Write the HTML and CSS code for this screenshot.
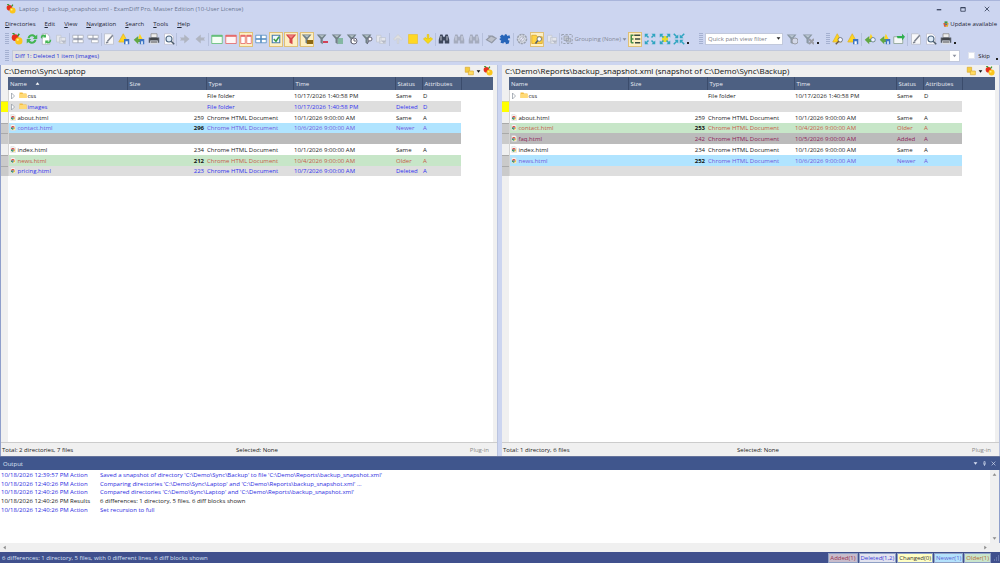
FILE: index.html
```html
<!DOCTYPE html>
<html lang="en">
<head>
<meta charset="utf-8">
<title>Laptop | backup_snapshot.xml - ExamDiff Pro</title>
<link rel="stylesheet" href="styles.css">
</head>
<body>
<svg class="defs" aria-hidden="true">
  <symbol id="apple" viewBox="0 0 16 16"><circle cx="5.5" cy="6" r="4.5" fill="#e8301c"/><path d="M5 2 2 0M9 4l2-3" stroke="#37962d" stroke-width="2"/><circle cx="10.5" cy="10.5" r="4.8" fill="#fbc51c"/><circle cx="9" cy="9" r="1.5" fill="#ffef83"/></symbol>
  <symbol id="refresh" viewBox="0 0 16 16"><path d="M2 7c1-6 8-7 11-3l2-2v6H9l2-2C8 3 5 5 5 7zM14 9c-1 6-8 7-11 3l-2 2V8h6l-2 2c3 3 6 1 6-1z" fill="#43b553"/></symbol>
  <symbol id="pages" viewBox="0 0 16 16"><path d="M3 1h7l3 4v10H3z" fill="#fff" stroke="#aab"/><path d="M1 6c0-4 4-5 6-3l1-2v5H4l1-1C3 4 3 6 3 8zM15 9c0 5-5 6-7 4l-1 2v-5h5l-2 1c2 1 3 0 3-2z" fill="#43b553"/></symbol>
  <symbol id="graypage" viewBox="0 0 16 16"><path d="M2 3h6v9H2zM6 6h8v8H6z" fill="#e4e6ec" stroke="#c2c7d2"/><path d="M8 10h7l-3 4z" fill="#b4b9c6"/></symbol>
  <symbol id="split" viewBox="0 0 16 16"><path d="M1 3h14v4H1zM1 9h14v4H1z" fill="#fff" stroke="#a4a9b6"/><path d="M8 3v10M2 8h12" stroke="#7b8291"/></symbol>
  <symbol id="split2" viewBox="0 0 16 16"><path d="M1 3h14v4H1zM6 9h9v4H6z" fill="#fff" stroke="#a4a9b6"/><path d="M8 3v4M2 8h12" stroke="#7b8291"/></symbol>
  <symbol id="edit" viewBox="0 0 16 16"><path d="M2 1h9l3 3v11H2z" fill="#f8f8fa" stroke="#b7bbc7"/><path d="m6 11 7-8M4 13l3-1" stroke="#7d8390" stroke-width="2"/></symbol>
  <symbol id="tri-save" viewBox="0 0 16 16"><path d="M7 1 13 12H1z" fill="#ffd51f" stroke="#dfb32b"/><path d="M8 8h7v7H8z" fill="#3e76c5"/><path d="M10 11h3v4h-3z" fill="#fff"/></symbol>
  <symbol id="tri-find" viewBox="0 0 16 16"><path d="M7 1 13 12H1z" fill="#ffd51f" stroke="#dfb32b"/><circle cx="11" cy="9" r="3" fill="#f3f5ff" stroke="#555f72"/><path d="m9 11-4 4" stroke="#6e5841" stroke-width="2"/></symbol>
  <symbol id="tri-green" viewBox="0 0 16 16"><path d="M9 1 15 12H6z" fill="#ffd51f"/><path d="M1 9 7 4v4h3v4H7v3z" fill="#62a744"/><path d="M9 8h6v7H9z" fill="#3e76c5"/><path d="M11 11h2v4h-2z" fill="#fff"/></symbol>
  <symbol id="tri-green-find" viewBox="0 0 16 16"><path d="M9 1 15 12H6z" fill="#ffd51f"/><path d="M1 9 7 4v4h3v4H7v3z" fill="#62a744"/><circle cx="12" cy="9" r="3" fill="#eef2ff" stroke="#4c7090"/></symbol>
  <symbol id="print" viewBox="0 0 16 16"><path d="M4 1h8v5H4z" fill="#eee" stroke="#888"/><path d="M1 6h14v7H1z" fill="#555b65"/><path d="M3 10h10v5H3z" fill="#dadce2"/><path d="M3 8h10M4 12h8" stroke="#222" stroke-width="1"/></symbol>
  <symbol id="preview" viewBox="0 0 16 16"><path d="M2 1h8l4 4v10H2z" fill="#fff" stroke="#bbc"/><circle cx="8" cy="8" r="4" fill="#dfecf8" stroke="#506883" stroke-width="1.5"/><path d="m11 11 4 4" stroke="#4b5a6b" stroke-width="2"/></symbol>
  <symbol id="right" viewBox="0 0 16 16"><path d="M1 6h6V2l7 6-7 6v-4H1l2-2z" fill="#b0b5c1"/></symbol>
  <symbol id="left" viewBox="0 0 16 16"><path d="M15 6H9V2L2 8l7 6v-4h6l-2-2z" fill="#b0b5c1"/></symbol>
  <symbol id="win-green" viewBox="0 0 16 16"><path d="M1 3h14v11H1z" fill="#f5fff6" stroke="#55b96c"/><path d="M1 4h14" stroke="#55b96c" stroke-width="2"/></symbol>
  <symbol id="win-red" viewBox="0 0 16 16"><path d="M1 3h14v11H1z" fill="#fff5f5" stroke="#e35c5c"/><path d="M1 4h14" stroke="#e35c5c" stroke-width="2"/></symbol>
  <symbol id="win-split" viewBox="0 0 16 16"><path d="M1 3h6v11H1zM9 3h6v11H9z" fill="#fff" stroke="#e35c5c"/><path d="M1 4h6M9 4h6" stroke="#e35c5c" stroke-width="2"/></symbol>
  <symbol id="grid" viewBox="0 0 16 16"><path d="M1 3h14v10H1z" fill="#fff" stroke="#4c87bf"/><path d="M1 8h14M8 3v10" stroke="#4c87bf" stroke-width="2"/></symbol>
  <symbol id="check" viewBox="0 0 16 16"><path d="M3 3h10v10H3z" fill="#eff8ff" stroke="#497cac" stroke-width="1.5"/><path d="m5 8 3 3 4-6" fill="none" stroke="#3c9a40" stroke-width="2"/></symbol>
  <symbol id="funnel-red" viewBox="0 0 16 16"><path d="M1 2h14L10 8v7l-4-2V8z" fill="#d6474c"/><path d="M4 3h8L8 7z" fill="#f28380"/></symbol>
  <symbol id="funnel" viewBox="0 0 16 16"><path d="M1 2h13L9 8v7l-3-2V8z" fill="#718085"/><path d="M4 3h7L8 6z" fill="#b7c5ca"/></symbol>
  <symbol id="binoc" viewBox="0 0 16 16"><path d="M3 2h3l1 3h2l1-3h3l2 7v5H9v-4H7v4H1V9z" fill="currentColor"/><path d="M4 4v6M12 4v6" stroke="#edf0f7"/></symbol>
  <symbol id="up" viewBox="0 0 16 16"><path d="m8 2 6 6-2 2-3-3v7H7V7l-3 3-2-2z" fill="#dfdfdf" stroke="#c8ccd4"/></symbol>
  <symbol id="down" viewBox="0 0 16 16"><path d="m8 14 6-6-2-2-3 2V2H7v6L4 6 2 8z" fill="#f7da18" stroke="#e5c30c"/></symbol>
  <symbol id="square" viewBox="0 0 16 16"><path d="M2 2h12v12H2z" fill="#ffd824" stroke="#e7c340"/></symbol>
  <symbol id="stack" viewBox="0 0 16 16"><path d="m2 9 6-5 7 3-6 6zM4 4h6l3 2" fill="#bcc0ca" stroke="#9298a4" stroke-width="1.5"/></symbol>
  <symbol id="puzzle" viewBox="0 0 16 16"><path d="m1 5 3-3 3 2c0-3 4-3 4 0l3-1 1 4c-4-1-4 3-1 3l-1 4-4 1c1-3-3-4-3-1l-4-1 1-3C0 10 0 6 3 7z" fill="#2765b9"/></symbol>
  <symbol id="gear" viewBox="0 0 16 16"><circle cx="8" cy="8" r="6" fill="#dce0e8" stroke="#9ba1ad" stroke-width="2" stroke-dasharray="3 1"/><circle cx="8" cy="8" r="3" fill="#eef" stroke="#a1a7b2"/><path d="m5 12 6-8" stroke="#a1a7b2"/></symbol>
  <symbol id="folder" viewBox="0 0 16 16"><path d="M1 3h6l1 2h7v9H1z" fill="#f4bd42"/><path d="M1 6h14v8H1z" fill="#ffda77"/></symbol>
  <symbol id="folder-find" viewBox="0 0 16 16"><path d="M1 3h6l1 2h7v9H1z" fill="#ffd241" stroke="#d4a32b"/><circle cx="11" cy="8" r="3" fill="#fff" stroke="#536171"/><path d="m9 10-3 4" stroke="#536171" stroke-width="2"/></symbol>
  <symbol id="group" viewBox="0 0 16 16"><path d="M1 2h14v12H1z" fill="none" stroke="#8c939f" stroke-dasharray="3 2"/><path d="M4 4h6v6H4zM7 7h6v5H7z" fill="#c4c9d2" stroke="#969dab"/></symbol>
  <symbol id="tree" viewBox="0 0 16 16"><path d="M3 2v11M3 3h3M3 8h3M3 13h3" fill="none" stroke="#448b45" stroke-width="2"/><path d="M7 3h8M8 8h7M8 13h7" stroke="#3b4c3f" stroke-width="2"/></symbol>
  <symbol id="expand" viewBox="0 0 16 16"><path d="M1 6V1h5zM10 1h5v5zM15 10v5h-5zM6 15H1v-5z" fill="#2fa5c0"/><path d="m3 3 3 3M13 3l-3 3M13 13l-3-3M3 13l3-3" stroke="#2fa5c0" stroke-width="2"/></symbol>
  <symbol id="collapse" viewBox="0 0 16 16"><path d="M7 2v5H2zM9 2v5h5zM9 14V9h5zM7 14V9H2z" fill="#2fa5c0"/><path d="m1 1 4 4M15 1l-4 4M15 15l-4-4M1 15l4-4" stroke="#2fa5c0" stroke-width="2"/></symbol>
  <symbol id="mail" viewBox="0 0 16 16"><path d="M1 5h12v9H1z" fill="#f6f8f8" stroke="#849c8b"/><path d="M5 4h7V1l4 4-4 5V7H6z" fill="#30ae4e"/></symbol>
  <symbol id="folders" viewBox="0 0 16 16"><path d="M2 2h7v8H2z" fill="#f4cc3f" stroke="#d7a52a"/><path d="M7 8h8v6H7z" fill="#ffdc63" stroke="#d7a52a"/></symbol>
  <symbol id="update" viewBox="0 0 16 16"><path d="M1 5h7v10H3z" fill="#de5a34"/><path d="M7 5h8l-2 10H7z" fill="#e8ae2e"/><path d="M4 1h8v5H4z" fill="#3c9a49"/><path d="M6 7h5v4H6z" fill="#3a71b8"/></symbol>
  <symbol id="chrome" viewBox="0 0 16 16"><path d="M2 0h9l4 4v12H2z" fill="#f3f3f3" stroke="#ccc"/><path d="M8 4a5 5 0 0 0-5 3l3 4V8h7a5 5 0 0 0-5-4" fill="#dd483a"/><path d="M3 7a5 5 0 0 0 5 7l2-4H6z" fill="#30955a"/><path d="M13 8H9l1 2-2 4a5 5 0 0 0 5-6" fill="#f5c529"/><circle cx="8" cy="9" r="2" fill="#3c78cf"/></symbol>
  <symbol id="caret" viewBox="0 0 8 8"><path d="M1 2h6L4 6z" fill="currentColor"/></symbol>
  <symbol id="expander" viewBox="0 0 8 8"><path d="M2 0v8l4-4z" fill="#fff" stroke="#939ba5"/></symbol>
</svg>
<div class="app">
  <header class="titlebar">
    <svg class="icon"><use href="#apple"/></svg>
    <h1>Laptop&nbsp; |&nbsp; backup_snapshot.xml - ExamDiff Pro, Master Edition (10-User License)</h1>
    <div class="window-buttons">
      <button aria-label="Minimize"><svg viewBox="0 0 8 8"><path d="M1 5h6" stroke="currentColor" stroke-width="1.5"/></svg></button>
      <button aria-label="Maximize"><svg viewBox="0 0 8 8"><path d="M1 2h6v5H1zM1 2.5h6" fill="none" stroke="currentColor"/></svg></button>
      <button aria-label="Close"><svg viewBox="0 0 8 8"><path d="m1 1 6 6M7 1 1 7" stroke="currentColor"/></svg></button>
    </div>
  </header>
  <nav class="menu">
    <button><u>D</u>irectories</button><button><u>E</u>dit</button><button><u>V</u>iew</button><button><u>N</u>avigation</button><button><u>S</u>earch</button><button><u>T</u>ools</button><button><u>H</u>elp</button>
    <a class="update" href="#update"><svg class="icon small"><use href="#update"/></svg>Update available</a>
  </nav>
  <div class="toolbars">
    <div class="toolbar main-tools">
      <i class="handle"></i>
      <button aria-label="Compare"><svg class="icon"><use href="#apple"/></svg></button>
      <button aria-label="Refresh"><svg class="icon"><use href="#refresh"/></svg></button>
      <button aria-label="Swap"><svg class="icon"><use href="#pages"/></svg></button>
      <button aria-label="Copy"><svg class="icon"><use href="#graypage"/></svg></button>
      <i class="sep"></i>
      <button aria-label="Split panes"><svg class="icon"><use href="#split"/></svg></button>
      <button aria-label="Split details"><svg class="icon"><use href="#split2"/></svg></button>
      <i class="sep"></i>
      <button aria-label="Edit"><svg class="icon"><use href="#edit"/></svg></button>
      <button aria-label="Save report"><svg class="icon"><use href="#tri-save"/></svg></button>
      <button aria-label="Save diff"><svg class="icon"><use href="#tri-green"/></svg></button>
      <button aria-label="Print"><svg class="icon"><use href="#print"/></svg></button>
      <button aria-label="Preview"><svg class="icon"><use href="#preview"/></svg></button>
      <i class="sep"></i>
      <button aria-label="Copy right"><svg class="icon"><use href="#right"/></svg></button>
      <button aria-label="Copy left"><svg class="icon"><use href="#left"/></svg></button>
      <i class="sep"></i>
      <button aria-label="Left only"><svg class="icon"><use href="#win-green"/></svg></button>
      <button aria-label="Right only"><svg class="icon"><use href="#win-red"/></svg></button>
      <button class="on" aria-label="Side by side"><svg class="icon"><use href="#win-split"/></svg></button>
      <button aria-label="Grid"><svg class="icon"><use href="#grid"/></svg></button>
      <button class="on" aria-label="Check"><svg class="icon"><use href="#check"/></svg></button>
      <button class="on" aria-label="Filter"><svg class="icon"><use href="#funnel-red"/></svg></button>
      <i class="sep"></i>
      <button class="on" aria-label="Folder filter"><svg class="icon"><use href="#funnel"/><path d="M6 7h6v4H6z" fill="#8c6815"/></svg></button>
      <button aria-label="Exclude filter"><svg class="icon"><use href="#funnel"/><path d="M7 8h5v2H7z" fill="#d14258"/></svg></button>
      <button aria-label="Tree filter"><svg class="icon"><use href="#funnel"/><path d="M7 6h5M7 8h5M7 10h5" stroke="#3c9a56"/></svg></button>
      <button aria-label="Time filter"><svg class="icon"><use href="#funnel"/><circle cx="8" cy="8" r="3" fill="#fff" stroke="#667"/><path d="M8 6v2h2" fill="none" stroke="#667"/></svg></button>
      <button aria-label="Find filter"><svg class="icon"><use href="#funnel"/><circle cx="9" cy="6" r="2" fill="#fff" stroke="#667"/><path d="m8 8-2 3" stroke="#667"/></svg></button>
      <button aria-label="Paste filter"><svg class="icon"><use href="#graypage"/></svg></button>
      <i class="sep"></i>
      <button aria-label="Previous"><svg class="icon"><use href="#up"/></svg></button>
      <button aria-label="Current"><svg class="icon"><use href="#square"/></svg></button>
      <button aria-label="Next"><svg class="icon"><use href="#down"/></svg></button>
      <i class="sep"></i>
      <button class="navy" aria-label="Find"><svg class="icon"><use href="#binoc"/></svg></button>
      <button class="muted" aria-label="Find next"><svg class="icon"><use href="#binoc"/></svg></button>
      <button class="muted" aria-label="Find previous"><svg class="icon"><use href="#binoc"/></svg></button>
      <i class="sep"></i>
      <button aria-label="Merge"><svg class="icon"><use href="#stack"/></svg></button>
      <button aria-label="Plug-ins"><svg class="icon"><use href="#puzzle"/></svg></button>
      <i class="sep"></i>
      <button aria-label="Options"><svg class="icon"><use href="#gear"/></svg></button>
      <button class="on" aria-label="Find folder"><svg class="icon"><use href="#folder-find"/></svg></button>
      <button aria-label="Folders"><svg class="icon"><use href="#graypage"/></svg></button>
      <i class="sep"></i>
      <button class="grouping"><svg class="icon"><use href="#group"/></svg>Grouping (None)<svg class="caret"><use href="#caret"/></svg></button>
      <button class="on" aria-label="Tree"><svg class="icon"><use href="#tree"/></svg></button>
      <button aria-label="Expand"><svg class="icon"><use href="#expand"/></svg></button>
      <button aria-label="Expand differences"><svg class="icon"><path d="M3 3h6v6H3z" fill="#eadb2c"/><use href="#expand"/></svg></button>
      <button aria-label="Collapse"><svg class="icon"><use href="#collapse"/></svg></button>
      <i class="more"></i>
    </div>
    <div class="toolbar filter-tools">
      <i class="handle"></i>
      <div class="select-box"><select aria-label="Quick path view filter"><option>Quick path view filter</option></select><svg class="caret"><use href="#caret"/></svg></div>
      <button class="muted" aria-label="Apply filter"><svg class="icon"><use href="#funnel"/><circle cx="9" cy="8" r="3" fill="#d6dae5" stroke="#888"/></svg></button>
      <button class="muted" aria-label="Clear filter"><svg class="icon"><use href="#funnel"/><path d="m7 6 5 5m0-5-5 5" stroke="#888" stroke-width="2"/></svg></button>
      <i class="more"></i>
    </div>
    <div class="toolbar report-tools">
      <i class="handle"></i>
      <button aria-label="Find snapshot"><svg class="icon"><use href="#tri-find"/></svg></button>
      <button aria-label="Save snapshot"><svg class="icon"><use href="#tri-save"/></svg></button>
      <i class="sep"></i>
      <button aria-label="Find report"><svg class="icon"><use href="#tri-green-find"/></svg></button>
      <button aria-label="Store report"><svg class="icon"><use href="#tri-green"/></svg></button>
      <button aria-label="Send report"><svg class="icon"><use href="#mail"/></svg></button>
      <i class="sep"></i>
      <button aria-label="Edit report"><svg class="icon"><use href="#edit"/></svg></button>
      <button aria-label="Preview report"><svg class="icon"><use href="#preview"/></svg></button>
      <button aria-label="Print report"><svg class="icon"><use href="#print"/></svg></button>
      <i class="more"></i>
    </div>
  </div>
  <div class="diff-bar">
    <i class="handle"></i>
    <div class="select-box diff-select"><select aria-label="Current difference"><option>Diff 1: Deleted 1 item (images)</option></select><svg class="caret"><use href="#caret"/></svg></div>
    <label class="skip"><input type="checkbox">Skip</label>
    <i class="more"></i>
  </div>
  <main class="panes">
    <section class="pane">
      <div class="path"><h2>C:\Demo\Sync\Laptop</h2><button aria-label="Browse"><svg class="icon"><use href="#folders"/></svg></button><button aria-label="History"><svg class="caret"><use href="#caret"/></svg></button><button aria-label="Compare"><svg class="icon"><use href="#apple"/></svg></button></div>
      <div class="listing">
        <table>
          <colgroup><col class="c-mark"><col class="c-name"><col class="c-size"><col class="c-type"><col class="c-time"><col class="c-status"><col class="c-attr"><col></colgroup>
          <thead><tr><td></td><th>Name <svg class="sort" viewBox="0 0 8 8"><path d="M1 6h6L4 2z" fill="#fff"/></svg></th><th>Size</th><th>Type</th><th>Time</th><th>Status</th><th>Attributes</th><th></th></tr></thead>
          <tbody>
            <tr><td></td><td class="dir"><svg><use href="#expander"/></svg><svg><use href="#folder"/></svg>css</td><td></td><td>File folder</td><td>10/17/2026 1:40:58 PM</td><td>Same</td><td>D</td><td></td></tr>
            <tr class="deleted current"><td></td><td class="dir"><svg><use href="#expander"/></svg><svg><use href="#folder"/></svg>images</td><td></td><td>File folder</td><td>10/17/2026 1:40:58 PM</td><td>Deleted</td><td>D</td><td></td></tr>
            <tr><td></td><td><svg><use href="#chrome"/></svg>about.html</td><td>259</td><td>Chrome HTML Document</td><td>10/1/2026 9:00:00 AM</td><td>Same</td><td>A</td><td></td></tr>
            <tr class="newer"><td></td><td><svg><use href="#chrome"/></svg>contact.html</td><td>296</td><td>Chrome HTML Document</td><td>10/6/2026 9:00:00 AM</td><td>Newer</td><td>A</td><td></td></tr>
            <tr class="added"><td></td><td></td><td></td><td></td><td></td><td></td><td></td><td></td></tr>
            <tr><td></td><td><svg><use href="#chrome"/></svg>index.html</td><td>234</td><td>Chrome HTML Document</td><td>10/1/2026 9:00:00 AM</td><td>Same</td><td>A</td><td></td></tr>
            <tr class="older"><td></td><td><svg><use href="#chrome"/></svg>news.html</td><td>212</td><td>Chrome HTML Document</td><td>10/4/2026 9:00:00 AM</td><td>Older</td><td>A</td><td></td></tr>
            <tr class="deleted"><td></td><td><svg><use href="#chrome"/></svg>pricing.html</td><td>223</td><td>Chrome HTML Document</td><td>10/7/2026 9:00:00 AM</td><td>Deleted</td><td>A</td><td></td></tr>
          </tbody>
        </table>
      </div>
      <footer class="totals"><span>Total: 2 directories, 7 files</span><span>Selected: None</span><span class="plugin">Plug-in</span></footer>
    </section>
    <section class="pane">
      <div class="path"><h2>C:\Demo\Reports\backup_snapshot.xml (snapshot of C:\Demo\Sync\Backup)</h2><button aria-label="Browse"><svg class="icon"><use href="#folders"/></svg></button><button aria-label="History"><svg class="caret"><use href="#caret"/></svg></button><button aria-label="Compare"><svg class="icon"><use href="#apple"/></svg></button></div>
      <div class="listing">
        <table>
          <colgroup><col class="c-mark"><col class="c-name"><col class="c-size"><col class="c-type"><col class="c-time"><col class="c-status"><col class="c-attr"><col></colgroup>
          <thead><tr><td></td><th>Name</th><th>Size</th><th>Type</th><th>Time</th><th>Status</th><th>Attributes</th><th></th></tr></thead>
          <tbody>
            <tr><td></td><td class="dir"><svg><use href="#expander"/></svg><svg><use href="#folder"/></svg>css</td><td></td><td>File folder</td><td>10/17/2026 1:40:58 PM</td><td>Same</td><td>D</td><td></td></tr>
            <tr class="deleted current"><td></td><td></td><td></td><td></td><td></td><td></td><td></td><td></td></tr>
            <tr><td></td><td><svg><use href="#chrome"/></svg>about.html</td><td>259</td><td>Chrome HTML Document</td><td>10/1/2026 9:00:00 AM</td><td>Same</td><td>A</td><td></td></tr>
            <tr class="older"><td></td><td><svg><use href="#chrome"/></svg>contact.html</td><td>253</td><td>Chrome HTML Document</td><td>10/4/2026 9:00:00 AM</td><td>Older</td><td>A</td><td></td></tr>
            <tr class="added"><td></td><td><svg><use href="#chrome"/></svg>faq.html</td><td>242</td><td>Chrome HTML Document</td><td>10/5/2026 9:00:00 AM</td><td>Added</td><td>A</td><td></td></tr>
            <tr><td></td><td><svg><use href="#chrome"/></svg>index.html</td><td>234</td><td>Chrome HTML Document</td><td>10/1/2026 9:00:00 AM</td><td>Same</td><td>A</td><td></td></tr>
            <tr class="newer"><td></td><td><svg><use href="#chrome"/></svg>news.html</td><td>252</td><td>Chrome HTML Document</td><td>10/6/2026 9:00:00 AM</td><td>Newer</td><td>A</td><td></td></tr>
            <tr class="deleted"><td></td><td></td><td></td><td></td><td></td><td></td><td></td><td></td></tr>
          </tbody>
        </table>
      </div>
      <footer class="totals"><span>Total: 1 directory, 6 files</span><span>Selected: None</span><span class="plugin">Plug-in</span></footer>
    </section>
  </main>
  <section class="output">
    <header><h2>Output</h2>
      <button aria-label="Menu"><svg class="caret"><use href="#caret"/></svg></button>
      <button aria-label="Pin"><svg class="caret" viewBox="0 0 8 8"><path d="M2 5h4M3 5V1h2v4M4 5v3" fill="none" stroke="currentColor"/></svg></button>
      <button aria-label="Close output"><svg class="caret" viewBox="0 0 8 8"><path d="m1 1 6 6M7 1 1 7" stroke="currentColor"/></svg></button>
    </header>
    <div class="log">
      <table>
        <tr><td>10/18/2026 12:39:57 PM</td><td>Action</td><td>Saved a snapshot of directory 'C:\Demo\Sync\Backup' to file 'C:\Demo\Reports\backup_snapshot.xml'</td></tr>
        <tr><td>10/18/2026 12:40:26 PM</td><td>Action</td><td>Comparing directories 'C:\Demo\Sync\Laptop' and 'C:\Demo\Reports\backup_snapshot.xml' ...</td></tr>
        <tr><td>10/18/2026 12:40:26 PM</td><td>Action</td><td>Compared directories 'C:\Demo\Sync\Laptop' and 'C:\Demo\Reports\backup_snapshot.xml'</td></tr>
        <tr class="result"><td>10/18/2026 12:40:26 PM</td><td>Results</td><td>6 differences: 1 directory, 5 files. 6 diff blocks shown</td></tr>
        <tr><td>10/18/2026 12:40:26 PM</td><td>Action</td><td>Set recursion to full</td></tr>
      </table>
      <div class="vscroll"><svg viewBox="0 0 8 8"><path d="M1 6h6L4 2z"/></svg><svg viewBox="0 0 8 8"><path d="M1 2h6L4 6z"/></svg></div>
    </div>
    <div class="hscroll"><svg viewBox="0 0 8 8"><path d="M6 1v6L2 4z"/></svg><svg viewBox="0 0 8 8"><path d="M2 1v6l4-3z"/></svg></div>
  </section>
  <footer class="statusbar">
    <span class="summary">6 differences: 1 directory, 5 files, with 0 different lines. 6 diff blocks shown</span>
    <button class="tag t-added">Added(1)</button><button class="tag t-deleted">Deleted(1,2)</button><button class="tag t-changed">Changed(0)</button><button class="tag t-newer">Newer(1)</button><button class="tag t-older">Older(1)</button>
    <svg class="grip" viewBox="0 0 8 8"><path d="M6 2h1M6 4h1M4 4h1M6 6h1M4 6h1M2 6h1" stroke="#8b9ac8"/></svg>
  </footer>
</div>
</body>
</html>
```
FILE: styles.css
```css
* { box-sizing: border-box; }
body {
  margin: 0;
  font: 6px/8px "Open Sans", "Noto Sans", sans-serif;
  color: #222;
  background: #ccd5f0;
}
button, select, input { font: inherit; color: inherit; margin: 0; padding: 0; border: 0; background: none; }
h1, h2 { margin: 0; font-weight: 400; font-size: inherit; }
a { color: inherit; text-decoration: none; }
svg { flex: none; display: block; }
.defs { position: absolute; width: 0; height: 0; }
.icon { width: 12px; height: 12px; }
.icon.small { width: 6px; height: 6px; }
.caret { width: 5px; height: 5px; }

.app { display: flex; flex-direction: column; height: 100vh; }
.titlebar { display: flex; align-items: center; height: 17px; padding-left: 6px; gap: 3px; color: #6b7590; border-top: 1px solid #a9b5db; }
.titlebar .icon { width: 10px; height: 10px; }
.window-buttons { display: flex; gap: 18px; margin-left: auto; padding-right: 10px; color: #26304a; }
.window-buttons svg { width: 6px; height: 6px; }

.menu { display: flex; align-items: center; height: 13px; padding: 0 3px 0 5px; gap: 9px; color: #1e2433; }
.update { display: flex; align-items: center; gap: 1px; margin-left: auto; }
u { text-underline-offset: 1px; }

.toolbars { display: flex; height: 18px; align-items: center; }
.toolbar { display: flex; align-items: center; justify-content: space-between; }
.toolbar button { display: flex; align-items: center; justify-content: center; width: 14px; height: 15px; flex: none; }
.toolbar button.on { background: #fdefc3; border: 1px solid #dfc078; }
.toolbar .navy { color: #3d475c; }
.toolbar .muted { color: #959ba9; }
.muted .icon { opacity: 0.7; }
.toolbar .grouping { width: 66px; color: #858b99; gap: 1px; white-space: nowrap; }
.main-tools { width: 69%; padding-left: 5px; }
.filter-tools { width: 12%; margin-left: 9px; }
.report-tools { width: 13%; margin-left: 7px; }
.handle { width: 4px; height: 12px; flex: none; background: repeating-linear-gradient(#a4b0d0 0 1px, #ccd5f0 1px 2px); }
.sep { width: 1px; height: 13px; flex: none; background: #b6c0dc; }
.more { width: 2px; height: 2px; flex: none; align-self: flex-end; margin-bottom: 3px; background: #222; }
.select-box { position: relative; display: flex; }
.select-box select { appearance: none; width: 100%; height: 12px; padding-left: 2px; background: #fff; border: 1px solid #c2c9dc; color: #7c808a; border-radius: 0; }
.select-box .caret { position: absolute; right: 2px; top: 3px; }
.filter-tools .select-box { width: 78px; }

.diff-bar { display: flex; align-items: center; height: 17px; padding: 0 2px 2px 5px; gap: 3px; }
.diff-select { flex: 1; }
.diff-select select { background: #e1e1e1; color: #2a35d8; }
.diff-select .caret { width: 9px; height: 10px; padding: 2px; right: 1px; top: 1px; background: #fff; color: #8c92a0; }
.skip { display: flex; align-items: center; gap: 3px; padding: 0 3px 0 5px; }
.skip input { appearance: none; width: 7px; height: 7px; background: #fff; border: 1px solid #e0e4ef; }

.panes { display: grid; grid-template-columns: 1fr 1fr; gap: 4px; flex: 1; min-height: 0; }
.pane { display: flex; flex-direction: column; background: #f0f0f0; border-right: 1px solid #bac4df; min-width: 0; }
.pane:first-child { border-left: 1px solid #8f9fcb; }
.path { display: flex; align-items: center; height: 12px; padding: 0 4px 0 3px; gap: 2px; color: #111; }
.path h2 { flex: 1; font-size: 8px; line-height: 12px; white-space: nowrap; }
.path .icon { width: 10px; height: 10px; }
.listing { flex: 1; margin-right: 4px; background-color: #fff; box-shadow: inset 7px 0 #f0f0f0; }
.listing table { width: 100%; table-layout: fixed; border-collapse: collapse; }
.c-mark { width: 7px; }
.c-name { width: 119px; }
.c-size { width: 79px; }
.c-type { width: 87px; }
.c-time { width: 102px; }
.c-status { width: 27px; }
.c-attr { width: 39px; }
.listing td, .listing th { padding: 0 0 0 1px; white-space: nowrap; }
.listing thead tr { height: 13px; }
.listing th { background: #4d6082; color: #e9edf5; font-weight: 400; text-align: left; border-right: 1px solid #3b4c6c; padding-left: 2px; }
.listing th:last-child { border-right: 0; }
.listing tbody tr { height: 11px; }
.listing tbody tr:nth-child(4n) { height: 10px; }
.listing tbody td:nth-child(3) { text-align: right; padding-right: 2px; }
.listing tbody td svg { display: inline-block; width: 6px; height: 7px; margin-right: 2px; vertical-align: -1px; }
.listing .dir svg { height: 6px; }
.listing .dir svg + svg { width: 8px; height: 8px; margin: 0 1px 0 1px; }
.listing .sort { display: inline-block; width: 5px; height: 5px; margin-left: 7px; }
.listing tbody td:last-child { background: #fff; }
.listing tbody td:first-child { background: #f0f0f0; border-right: 1px solid #d4d4d4; }
.deleted { background: #dedede; color: #3232f0; }
.newer { background: #b0e4ff; color: #7058dc; }
.older { background: #c7e6c8; color: #c65c4a; }
.added { background: #bbb; color: #8c1f58; }
.listing tbody .newer td:nth-child(3), .listing tbody .older td:nth-child(3) { color: #111; font-weight: 700; }
.listing tbody tr:is(.newer, .older, .added, .deleted) td:first-child { background: #cacaca; border-top: 1px solid #aaa; }
.listing tbody .current.current td:first-child { background: #ff0; border-top-color: #dada70; }
.totals { display: grid; grid-template-columns: 234px 1fr auto; align-items: center; height: 14px; padding: 0 8px 0 1px; border-top: 1px solid #ccc; }
.plugin { color: #888; }

.output { background: #fff; }
.output header { display: flex; align-items: center; height: 14px; padding: 0 4px 0 3px; gap: 4px; background: #40568d; color: #dce3f5; border-top: 1px solid #65739b; }
.output h2 { flex: 1; }
.log { display: flex; justify-content: space-between; height: 73px; border-right: 1px solid #8f9fcb; }
.log table { border-collapse: collapse; align-self: flex-start; color: #2a2ae0; white-space: nowrap; }
.log tr { height: 9px; }
.log tr:nth-child(3n) { height: 8px; }
.log td { padding: 0; }
.log td:first-child { width: 70px; padding-left: 1px; }
.log td:nth-child(2) { width: 30px; }
.log .result { color: #222; }
.vscroll, .hscroll { display: flex; justify-content: space-between; background: #f0f0f0; padding: 2px; }
.vscroll { flex-direction: column; width: 9px; }
.hscroll { height: 9px; padding-right: 12px; }
.vscroll svg, .hscroll svg { width: 5px; height: 5px; fill: #8b8b8b; }

.statusbar { display: flex; align-items: center; height: 11px; padding-left: 2px; gap: 1px; background: #40508d; color: #dbe2f5; }
.summary { flex: 1; }
.tag { height: 10px; padding: 0 1px; border: 1px solid #8fa0c4; white-space: nowrap; }
.t-added { background: #c8bccb; color: #96304e; }
.t-deleted { background: #e2e3ef; color: #3a3ad8; }
.t-changed { background: #ffffc4; color: #333; }
.t-newer { background: #b4e2fc; color: #5c62d4; }
.t-older { background: #c9e5cc; color: #b36a35; }
.grip { width: 8px; height: 8px; }
```
